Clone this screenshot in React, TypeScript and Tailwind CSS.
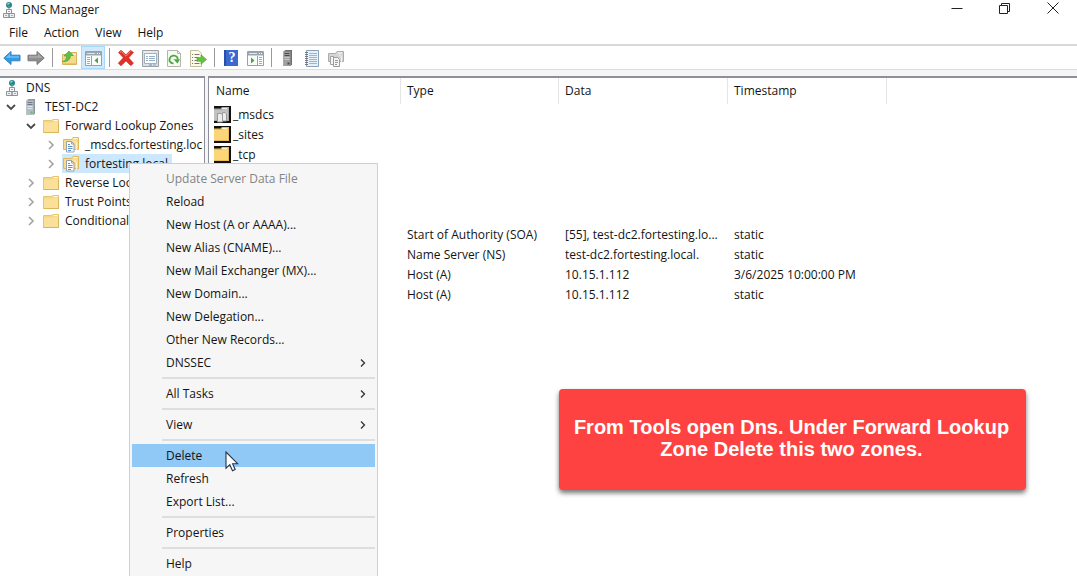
import React, { useState } from 'react';
import clsx from 'clsx';

// Iconos
const DnsIcon = () => (
  <svg width="16" height="18" viewBox="0 0 16 18" fill="none">
    <circle cx="8" cy="4" r="3" fill="#2a8295" />
    <path d="M6 3c1-1.500 2-1.500 3-.9-.4 1.200-1.400 1-1.700 2-.7.2-1-.6-1.300-1.100z" fill="#7fdcc0" />
    <path d="M6.800 5.800c.6-.8 1.600-1 2.600-.9-.5.900-1.500 1.400-2.600.9z" fill="#4fb96a" />
    <path d="M8 7v3" stroke="#7d858c" />
    <path d="M5.500 8.500h5v4h-5z" fill="#f4f6f8" stroke="#8b9299" />
    <path d="M2.500 12.500h5.500v4H2.500zM8 12.500h5.500v4H8z" fill="#eef0f2" stroke="#8b9299" />
    <path d="M4 14.500h2M10 14.500h2M7 10.500h2" stroke="#a2a9af" />
  </svg>
);

const ServerIcon = ({ dark = false }) => (
  <svg width="16" height="18" viewBox="0 0 16 18" fill="none">
    <path d="M3.500 2.500L5.500 1H12v14.500L10.500 17h-7z" fill={dark ? '#6f6f6f' : '#8d979f'} />
    <path d="M3.500 2.500h7V17h-7z" fill={dark ? '#a0a0a0' : '#b3bdc4'} />
    <path d="M4.500 4.500h5M4.500 6.500h5" stroke={dark ? '#4a4a4a' : '#717c85'} />
    <path d="M4.500 8.500h5M4.500 10.500h5" stroke={dark ? '#c7c7c7' : '#dfe5e8'} />
    <path d="M7.500 13.500h2v2h-2z" fill={dark ? '#4a4a4a' : '#5fc04f'} />
  </svg>
);

const FolderIcon = () => (
  <svg width="16" height="16" viewBox="0 0 16 16" fill="none">
    <path d="M.5 2.500h8l1.500-1h5.500v13H.5z" fill="#f5d682" stroke="#e6c573" />
    <path d="M10.500 2.500h4" stroke="#fffae6" />
    <path d="M1 4.500h8.500L11 3.500h4V14H1z" fill="#fbe09a" />
    <path d="M.5 14.500h15V5" stroke="#dbb55c" />
  </svg>
);

const ZoneIcon = () => (
  <svg width="16" height="17" viewBox="0 0 16 17" fill="none">
    <path d="M.5 3.500h8L10 1.500h5.500v12H.5z" fill="#f9db8b" stroke="#e0b85a" />
    <path d="M10.500 2.500h4" stroke="#fffae6" />
    <path d="M11 5l2.500 2v7.500" stroke="#fff2cb" />
    <path d="M3.500 5.500h5l2.500 2.500v8H3.500z" fill="#fff" stroke="#94a2b3" />
    <path d="M8.500 5.500V8H11" stroke="#94a2b3" />
    <path d="M5 8.500h2M5 10.500h4.500M5 12.500h4.500M5 14.500h3" stroke="#5f8fc4" />
  </svg>
);

// Los iconos de la lista llevan un marco negro arriba, a la derecha y abajo
const ListFolderIcon = ({ gray = false }) => (
  <svg width="17" height="17" viewBox="0 0 17 17" fill="none">
    <path d="M0 0h17v17H0z" fill="#111" />
    <path d="M0 2.500h6.500L8 1h7v14H0z" fill={gray ? '#a9a9a9' : '#e9bb55'} />
    <path d="M0 4h8l1.500-1.500H14V14H0z" fill={gray ? '#c2c2c2' : '#fbd678'} />
    <path d="M8 2.500h5" stroke={gray ? '#eee' : '#fff1c4'} />
    {gray && <path d="M3.500 7.500H7l1.500 1.500v7h-5zM8.500 6.500H11l1.500 1.500v7h-4z" fill="#ededed" stroke="#999" />}
  </svg>
);

const ArrowIcon = ({ back = false }) => (
  <svg width="18" height="16" viewBox="0 0 18 16">
    {back ? (
      <>
        <path d="M.8 8L8 1.500v3.700h9v5.600H8v3.700z" fill="#2f9be6" stroke="#3c7fb8" />
        <path d="M2.500 7.700L7 3.700v2.500h9v1.500z" fill="#6cc0f5" />
      </>
    ) : (
      <>
        <path d="M17.200 8L10 1.500v3.700H1v5.600h9v3.700z" fill="#8e8e8e" stroke="#777" />
        <path d="M15.500 7.700L11 3.700v2.500H2v1.500z" fill="#adadad" />
      </>
    )}
  </svg>
);

const UpFolderIcon = () => (
  <svg width="18" height="18" viewBox="0 0 18 18" fill="none">
    <path d="M2.500 5.500h7l1.500-2h5.500v12h-14z" fill="#f7d98a" stroke="#d9b45e" />
    <path d="M12 5.500h4" stroke="#fff6d8" />
    <path d="M3 14.500h13" stroke="#eac56d" />
    <path d="M2.500 12.500c3-.8 4-2.800 4-5.500H4l5-5 4.500 4.500H10.500c0 4-3 6.800-8 6z" fill="#5fc046" stroke="#4b9c38" strokeWidth=".6" />
  </svg>
);

const ConsoleIcon = ({ play = false }) => (
  <svg width="17" height="15" viewBox="0 0 17 15" fill="none">
    <path d="M.5.500h16v14H.5z" fill="#fbfcfc" stroke="#97a1a9" />
    <path d="M1 1h15v3.500H1z" fill="#9aa6af" />
    <path d="M2 2.500h8" stroke="#dfe5e9" />
    <path d="M12 2.500h1M14 2.500h1" stroke="#fff" />
    <path d={play ? 'M10.500 5v9' : 'M6.500 5v9'} stroke="#97a1a9" />
    <path d={play ? 'M12 6.500h3M12 8.500h3M12 10.500h3M12 12.500h3' : 'M2 6.500h3M2 8.500h3M2 10.500h3M2 12.500h3'} stroke="#93b1cb" />
    <path d={play ? 'M4 6.500L7.500 9.500 4 12.500z' : 'M13 6.500L9.500 9.500l3.500 3z'} fill="#43a83a" />
  </svg>
);

const DeleteIcon = () => (
  <svg width="18" height="18" viewBox="0 0 18 18">
    <path d="M1.500 3.500L4 1.200l5 4.600 4.500-4.600 3 2.300-4.800 5.300 4.800 5.400-2.700 2.500L9 11.900l-5 4.900-2.700-2.600 5-5.400z" fill="#e32f24" stroke="#b92b23" strokeWidth=".6" />
    <path d="M3 3.500l1.200-1L9 7.200l4.400-4.500" stroke="#f5847b" fill="none" />
  </svg>
);

const PropertiesIcon = () => (
  <svg width="17" height="17" viewBox="0 0 17 17" fill="none">
    <path d="M.5.500h16v16H.5z" fill="#dde0e3" stroke="#99a1a7" />
    <path d="M2.500 3.500h12v10h-12z" fill="#fff" stroke="#a5b0b8" />
    <path d="M2 2h10M14 2h1" stroke="#f5f7f8" />
    <path d="M4 6.500h2M7 6.500h6M4 8.500h2M7 8.500h6M4 10.500h2M7 10.500h6" stroke="#8fb0cc" />
    <path d="M7 15h3" stroke="#3e9bdc" />
    <path d="M11 15h3" stroke="#99a1a7" />
  </svg>
);

const RefreshIcon = () => (
  <svg width="16" height="17" viewBox="0 0 16 17" fill="none">
    <path d="M1.500.500h10l3 3v13h-13z" fill="#f8f8f4" stroke="#b4b5ac" />
    <path d="M11.500.500v3h3" stroke="#b4b5ac" />
    <path d="M7.500 13.300C4 13.500 3 10.800 3.600 8.700 4.600 5.400 9 4.500 11 7c.6.800.8 1.600.7 2.500" stroke="#48ab3e" strokeWidth="1.800" />
    <path d="M7.500 9.200H14l-2.500 4.300z" fill="#48ab3e" />
  </svg>
);

const ExportIcon = () => (
  <svg width="18" height="17" viewBox="0 0 18 17" fill="none">
    <path d="M1.500.500h8l3 3v13h-11z" fill="#fdfaea" stroke="#c2bd9d" />
    <path d="M3 4.500h1M5.500 4.500h5M3 7.500h1M5.500 7.500h4M3 10.500h1M5.500 10.500h3M3 13.500h1M5.500 13.500h5" stroke="#7a7a70" />
    <path d="M8 7.700h4V4.800l5.500 4.700-5.500 4.700v-2.900H8z" fill="#63c33c" stroke="#55a53d" strokeWidth=".7" />
  </svg>
);

const HelpIcon = () => (
  <span className="flex h-4 w-3.5 items-center justify-center border-l-2 border-[#2b4fa8] bg-[#3a6ad0] font-['Liberation_Serif',serif] text-sm leading-4 font-bold text-white">?</span>
);

const NotebookIcon = () => (
  <svg width="16" height="17" viewBox="0 0 16 17" fill="none">
    <path d="M2.500.500h12v16h-12z" fill="#e5f0f9" stroke="#8ba3b8" />
    <path d="M5 3.500h8M5 5.500h8M5 7.500h8M5 9.500h8M5 11.500h8M5 13.500h8" stroke="#94b8df" />
    <path d="M1 2.500h3M1 4.500h3M1 6.500h3M1 8.500h3M1 10.500h3M1 12.500h3M1 14.500h3" stroke="#6f7a84" />
  </svg>
);

const GrayZoneIcon = () => (
  <svg width="16" height="17" viewBox="0 0 16 17" fill="none">
    <path d="M.5 3.500h7l1.500-2h6.500v10H.5z" fill="#d5d5d5" stroke="#acacac" />
    <path d="M10 3h4" stroke="#fff" />
    <path d="M11 5l2.500 1.500v6" stroke="#f1f1f1" />
    <path d="M2.500 6.500h3v8h-3z" fill="#f6f6f6" stroke="#a0a0a0" />
    <path d="M5.500 7.500h4l2 2v7h-6z" fill="#f6f6f6" stroke="#999" />
    <path d="M7 10.500h3M7 12.500h3M7 14.500h2" stroke="#999" />
  </svg>
);

const Chevron = ({ open = false }) => (
  <svg width="10" height="10" viewBox="0 0 10 10" fill="none">
    {open ? (
      <path d="M1 3l4 4 4-4" stroke="#4a4a4a" strokeWidth="1.800" />
    ) : (
      <path d="M3 1l4 4-4 4" stroke="#a3a3a3" strokeWidth="1.600" />
    )}
  </svg>
);

const toolGroups = [
  [
    { label: 'Back', icon: <ArrowIcon back /> },
    { label: 'Forward', icon: <ArrowIcon /> },
  ],
  [
    { label: 'Up one level', icon: <UpFolderIcon /> },
    { label: 'Show console tree', icon: <ConsoleIcon />, active: true },
  ],
  [
    { label: 'Delete', icon: <DeleteIcon /> },
    { label: 'Properties', icon: <PropertiesIcon /> },
    { label: 'Refresh', icon: <RefreshIcon /> },
    { label: 'Export list', icon: <ExportIcon /> },
  ],
  [
    { label: 'Help', icon: <HelpIcon /> },
    { label: 'Show action pane', icon: <ConsoleIcon play /> },
  ],
  [
    { label: 'New server', icon: <ServerIcon dark /> },
    { label: 'New record', icon: <NotebookIcon /> },
    { label: 'New zone', icon: <GrayZoneIcon /> },
  ],
];

const indents = ['pl-[3px]', 'pl-[3px]', 'pl-[23px]', 'pl-[43px]'];

const tree = [
  { name: 'DNS', level: 0, icon: <DnsIcon /> },
  { name: 'TEST-DC2', level: 1, icon: <ServerIcon />, open: true },
  { name: 'Forward Lookup Zones', level: 2, icon: <FolderIcon />, open: true },
  { name: '_msdcs.fortesting.local', level: 3, icon: <ZoneIcon /> },
  { name: 'fortesting.local', level: 3, icon: <ZoneIcon /> },
  { name: 'Reverse Lookup Zones', level: 2, icon: <FolderIcon /> },
  { name: 'Trust Points', level: 2, icon: <FolderIcon /> },
  { name: 'Conditional Forwarders', level: 2, icon: <FolderIcon /> },
];

const records = [
  { name: '_msdcs', icon: <ListFolderIcon gray /> },
  { name: '_sites', icon: <ListFolderIcon /> },
  { name: '_tcp', icon: <ListFolderIcon /> },
  {},
  {},
  {},
  { type: 'Start of Authority (SOA)', data: '[55], test-dc2.fortesting.lo...', time: 'static' },
  { type: 'Name Server (NS)', data: 'test-dc2.fortesting.local.', time: 'static' },
  { type: 'Host (A)', data: '10.15.1.112', time: '3/6/2025 10:00:00 PM' },
  { type: 'Host (A)', data: '10.15.1.112', time: 'static' },
];

const menuGroups = [
  [
    { label: 'Update Server Data File', disabled: true },
    { label: 'Reload' },
    { label: 'New Host (A or AAAA)...' },
    { label: 'New Alias (CNAME)...' },
    { label: 'New Mail Exchanger (MX)...' },
    { label: 'New Domain...' },
    { label: 'New Delegation...' },
    { label: 'Other New Records...' },
    { label: 'DNSSEC', sub: true },
  ],
  [{ label: 'All Tasks', sub: true }],
  [{ label: 'View', sub: true }],
  [{ label: 'Delete', active: true }, { label: 'Refresh' }, { label: 'Export List...' }],
  [{ label: 'Properties' }],
  [{ label: 'Help' }],
];

const TitleBar = () => (
  <header className="flex h-5 items-center pl-px">
    <DnsIcon />
    <h1 className="ml-[5px] flex-1">DNS Manager</h1>
    <button aria-label="Minimize" className="flex h-5 w-12 items-center justify-center pb-1">
      <svg width="12" height="12" viewBox="0 0 12 12" stroke="#222"><path d="M.5 6.500h11" /></svg>
    </button>
    <button aria-label="Restore" className="flex h-5 w-12 items-center justify-center pb-1">
      <svg width="12" height="12" viewBox="0 0 12 12" fill="none" stroke="#222"><path d="M.5 3.500h8v8h-8zM2.500 3V1.500h8v8H9" /></svg>
    </button>
    <button aria-label="Close" className="flex h-5 w-12 items-center justify-center pb-1">
      <svg width="12" height="12" viewBox="0 0 12 12" fill="none" stroke="#222"><path d="M.5.500l11 11M11.500.500l-11 11" /></svg>
    </button>
  </header>
);

const ContextMenu = () => (
  <div role="menu" className="absolute top-[163px] left-[129px] w-[249px] border border-[#cfcfcf] bg-[#f6f6f6] px-0.5 py-[3px]">
    {menuGroups.map((group, i) => (
      <div key={i} role="group">
        {i > 0 && <hr className="my-[3px] ml-[30px] border-t-2 border-[#dedede]" />}
        {group.map(item => (
          <button
            key={item.label}
            role="menuitem"
            disabled={item.disabled}
            className={clsx(
              'flex h-[23px] w-full items-center pr-2 pl-[34px] text-left',
              item.active && 'bg-[#90c8f6]',
              item.disabled && 'text-[#848484]'
            )}
          >
            <span className="flex-1">{item.label}</span>
            {item.sub && (
              <svg width="8" height="10" viewBox="0 0 8 10" fill="none" stroke="#333" strokeWidth="1.300"><path d="M2 1.500L5.500 5 2 8.500" /></svg>
            )}
          </button>
        ))}
      </div>
    ))}
  </div>
);

export default function App() {
  const [selected, setSelected] = useState('fortesting.local');

  return (
    <div className="relative flex h-screen flex-col overflow-hidden bg-white font-['Open_Sans',sans-serif] text-xs leading-4 whitespace-nowrap text-[#141414]">
      <TitleBar />
      <nav className="flex h-6 items-end pb-[3px] pl-px">
        {['File', 'Action', 'View', 'Help'].map(item => (
          <button key={item} className="px-2">{item}</button>
        ))}
      </nav>

      {/* Barra de herramientas */}
      <div role="toolbar" className="flex h-[26px] shrink-0 items-stretch border-t-2 border-b border-t-[#d9d9d9] border-b-[#dcdcdc]">
        {toolGroups.map((group, i) => (
          <div key={i} className="flex items-stretch">
            {i > 0 && <span className="mx-1 my-0.5 w-px bg-[#9a9a9a]" />}
            {group.map(tool => (
              <button
                key={tool.label}
                aria-label={tool.label}
                className={clsx('flex w-6 items-center justify-center pt-px', tool.active && 'border border-[#a6d8f8] bg-[#cfeafc]')}
              >
                {tool.icon}
              </button>
            ))}
          </div>
        ))}
      </div>

      <main className="flex min-h-0 flex-1 gap-[3px] bg-[#f5f5f5] pt-1.5">
        {/* Árbol */}
        <div role="tree" className="w-[205px] shrink-0 border-t-2 border-r border-[#8d8f9b] bg-white">
          <div className="mr-0.5 overflow-hidden">
            {tree.map(node => (
              <div key={node.name} role="treeitem" aria-selected={selected === node.name} className={clsx('flex h-[19px] items-center gap-[3px]', indents[node.level])}>
                {node.level > 0 && (
                  <span className="flex w-4 shrink-0 justify-center">
                    <Chevron open={node.open} />
                  </span>
                )}
                <button
                  onClick={() => setSelected(node.name)}
                  className={clsx('flex h-[19px] shrink-0 items-center gap-1.5 pr-1 pl-px', selected === node.name && 'bg-[#cce8ff]')}
                >
                  {node.icon}
                  {node.name}
                </button>
              </div>
            ))}
          </div>
        </div>

        {/* Registros */}
        <div className="min-w-0 flex-1 overflow-hidden border-t-2 border-l border-[#8d8f9b] bg-white">
          <table className="w-full table-fixed border-separate border-spacing-0 text-left">
            <thead>
              <tr className="h-[26px]">
                <th className="w-48 border-r border-[#e5e5e5] pl-[7px] font-normal">Name</th>
                <th className="w-[158px] border-r border-[#e5e5e5] pl-1.5 font-normal">Type</th>
                <th className="w-[169px] border-r border-[#e5e5e5] pl-1.5 font-normal">Data</th>
                <th className="w-[159px] border-r border-[#e5e5e5] pl-1.5 font-normal">Timestamp</th>
                <td />
              </tr>
            </thead>
            <tbody>
              {records.map((record, i) => (
                <tr key={i} className="h-5">
                  <td className="pt-px pl-[5px]">
                    {record.name && (
                      <span className="flex items-center gap-0.5">
                        {record.icon}
                        {record.name}
                      </span>
                    )}
                  </td>
                  <td className="pt-px pl-1.5">{record.type}</td>
                  <td className="pt-px pl-1.5">{record.data}</td>
                  <td className="pt-px pl-1.5">{record.time}</td>
                  <td />
                </tr>
              ))}
            </tbody>
          </table>
        </div>
      </main>

      <ContextMenu />

      {/* Puntero */}
      <svg className="absolute top-[451px] left-[225px]" width="14" height="21" viewBox="0 0 14 21">
        <path d="M1 1v16.200l3.800-3.500 2.700 6 2.700-1.200-2.600-5.800h5z" fill="#fff" stroke="#26324a" strokeWidth="1.100" />
      </svg>

      {/* Nota */}
      <aside className="absolute top-[389px] left-[559px] flex h-[101px] w-[467px] items-center justify-center rounded bg-[#fe4242] pr-0.5 pb-1 text-center font-['Liberation_Sans',sans-serif] text-xl leading-[22px] font-bold text-white shadow-[0_3px_5px_rgba(0,0,0,0.55)]">
        <p>
          From Tools open Dns. Under Forward Lookup
          <br />
          Zone Delete this two zones.
        </p>
      </aside>
    </div>
  );
}
